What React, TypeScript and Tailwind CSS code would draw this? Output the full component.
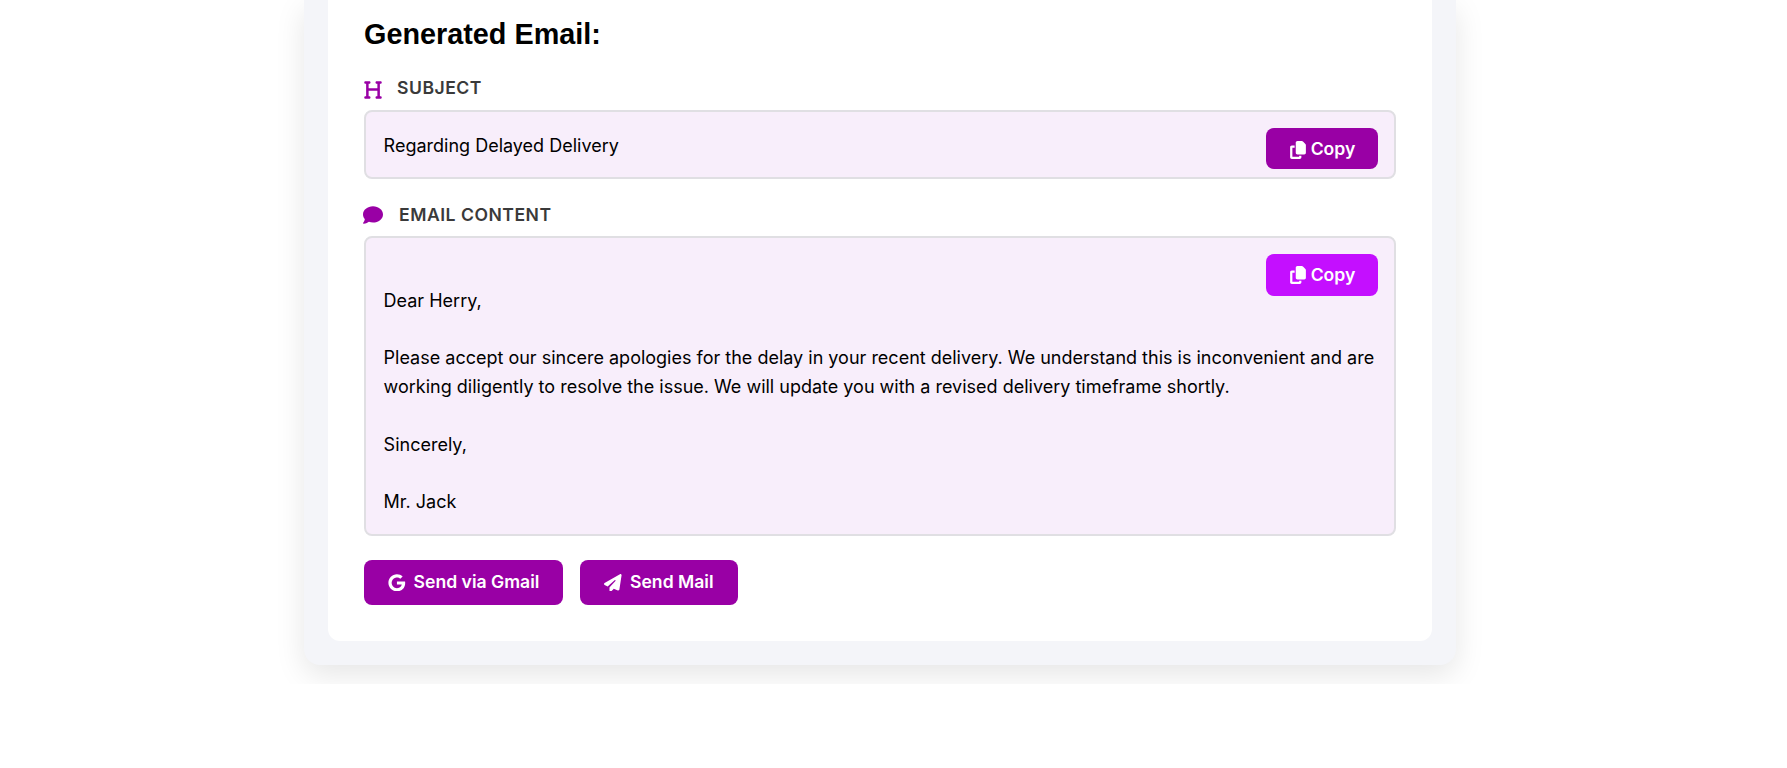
import React from "react";
import { FaComment, FaCopy, FaGoogle, FaHeading, FaPaperPlane } from "react-icons/fa6";

const emailBody = `
Dear Herry,

Please accept our sincere apologies for the delay in your recent delivery. We understand this is inconvenient and are working diligently to resolve the issue. We will update you with a revised delivery timeframe shortly.

Sincerely,

Mr. Jack`;

const App: React.FC = () => {
  return (
    <div className="h-[768px] bg-white font-['Inter',sans-serif]">
      <div className="h-[684px] overflow-hidden pl-[304px]">
        <div className="w-[1152px] rounded-b-2xl bg-[#f4f5f9] px-6 pb-6 shadow-[0_10px_30px_rgba(0,0,0,0.1)]">
          <div className="rounded-b-xl bg-white px-9 pb-9 pt-4">
            <h2 className="mb-6 font-['Liberation_Sans',sans-serif] text-[28.8px] font-bold leading-9 text-black">
              Generated Email:
            </h2>

            <div className="mb-2.5 flex h-6 items-center gap-[14px] text-[17.6px] font-semibold uppercase tracking-[0.5px] text-[#3a3a3a]">
              <FaHeading className="-ml-px mt-1 text-xl text-[#9900a5]" />
              <span>Subject</span>
            </div>
            <div className="relative mb-[23px] rounded-lg border-2 border-[#e0dfe3] bg-[#f8eefb] px-[17.6px] pb-4 pt-5 text-lg leading-[1.6] text-black">
              <button className="absolute right-4 top-4 flex h-[41px] w-28 items-center justify-center gap-1 rounded-lg bg-[#9900a5] pt-0.5 text-[17.6px] font-semibold text-white">
                <FaCopy className="text-lg" />
                Copy
              </button>
              Regarding Delayed Delivery
            </div>

            <div className="mb-2.5 flex h-6 items-center gap-4 pt-0.5 text-[17.6px] font-semibold uppercase tracking-[0.5px] text-[#3a3a3a]">
              <FaComment className="-ml-px text-xl text-[#9900a5]" />
              <span>Email Content</span>
            </div>
            <div className="relative mb-6 whitespace-pre-wrap rounded-lg border-2 border-[#e0dfe3] bg-[#f8eefb] px-[17.6px] pb-[17px] pt-5 text-lg leading-[1.6] text-black">
              <button className="absolute right-4 top-4 flex h-[42px] w-28 items-center justify-center gap-1 rounded-lg bg-[#c40fff] text-[17.6px] font-semibold text-white">
                <FaCopy className="text-lg" />
                Copy
              </button>
              {emailBody}
            </div>

            <div className="flex gap-[17px]">
              <button className="flex h-[45px] items-center gap-2 rounded-lg bg-[#9900a5] px-6 text-[17.6px] font-semibold text-white">
                <FaGoogle className="text-[17.6px]" />
                Send via Gmail
              </button>
              <button className="flex h-[45px] items-center gap-2 rounded-lg bg-[#9900a5] px-6 text-[17.6px] font-semibold text-white">
                <FaPaperPlane className="text-[17.6px]" />
                Send Mail
              </button>
            </div>
          </div>
        </div>
      </div>
    </div>
  );
};

export default App;
